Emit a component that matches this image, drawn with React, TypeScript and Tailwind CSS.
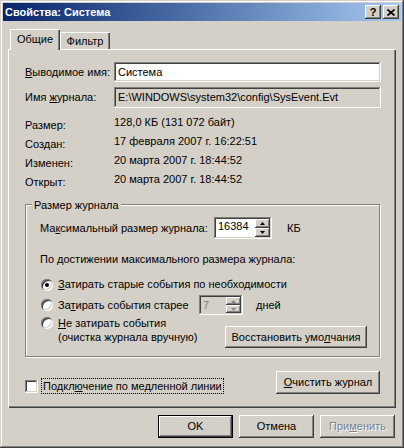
import React from "react";

const RAISED =
  "shadow-[inset_-1px_-1px_#404040,inset_1px_1px_#ffffff,inset_-2px_-2px_#808080,inset_2px_2px_#d4d0c8]";
const SUNKEN =
  "shadow-[inset_-1px_-1px_#ffffff,inset_1px_1px_#808080,inset_-2px_-2px_#d4d0c8,inset_2px_2px_#404040]";
const DEFAULT_BTN =
  "shadow-[inset_0_0_0_1px_#000000,inset_-2px_-2px_#404040,inset_2px_2px_#ffffff,inset_-3px_-3px_#808080]";

function Arrow({ up, color = "#000" }: { up?: boolean; color?: string }) {
  return (
    <svg width="5" height="3" viewBox="0 0 5 3" className="block">
      {up ? (
        <path d="M2.5 0 L5 3 L0 3 Z" fill={color} />
      ) : (
        <path d="M0 0 L5 0 L2.5 3 Z" fill={color} />
      )}
    </svg>
  );
}

function SpinButtons({ disabled }: { disabled?: boolean }) {
  const c = disabled ? "#808080" : "#000";
  return (
    <div className="flex flex-col w-[15px] h-full">
      <div className={`flex-1 bg-[#d4d0c8] ${RAISED} flex items-center justify-center`}>
        <Arrow up color={c} />
      </div>
      <div className={`flex-1 bg-[#d4d0c8] ${RAISED} flex items-center justify-center`}>
        <Arrow color={c} />
      </div>
    </div>
  );
}

function Radio({ checked }: { checked?: boolean }) {
  return (
    <div
      className="w-[12px] h-[12px] shrink-0 rounded-full bg-white flex items-center justify-center shadow-[inset_1px_1px_#808080,inset_-1px_-1px_#ffffff,inset_2px_2px_#404040,inset_-2px_-2px_#d4d0c8]"
    >
      {checked && <div className="w-[4px] h-[4px] rounded-full bg-black" />}
    </div>
  );
}

export default function App() {
  return (
    <div className="w-[404px] h-[448px] bg-[#d4d0c8] p-[3px] flex flex-col font-['Liberation_Sans',Arial,sans-serif] text-[11px] leading-[13px] text-black shadow-[inset_-1px_-1px_#404040,inset_1px_1px_#d4d0c8,inset_-2px_-2px_#808080,inset_2px_2px_#ffffff] select-none">
      {/* Title bar */}
      <div className="h-[18px] flex items-center bg-linear-to-r from-[#0a246a] to-[#a6caf0] pl-[2px] pr-[2px]">
        <div className="flex-1 text-white font-bold text-[11px]">Свойства: Система</div>
        <div className={`w-[16px] h-[14px] bg-[#d4d0c8] ${RAISED} flex items-center justify-center font-bold text-[11px] leading-[11px]`}>
          ?
        </div>
        <div className={`ml-[2px] w-[16px] h-[14px] bg-[#d4d0c8] ${RAISED} flex items-center justify-center`}>
          <svg width="8" height="7" viewBox="0 0 8 7" className="block">
            <path d="M0.5 0.5 L7.5 6.5 M7.5 0.5 L0.5 6.5" stroke="#000" strokeWidth="1.7" />
          </svg>
        </div>
      </div>

      <div className="flex flex-col px-[5px]">
        {/* Tabs */}
        <div className="mt-[8px] h-[20px] flex items-end relative z-10 pl-[2px]">
          <div className="w-[50px] h-[21px] -mb-[1px] bg-[#d4d0c8] flex items-center justify-center pb-[1px] shadow-[inset_1px_1px_#ffffff,inset_-1px_0_#404040,inset_-2px_0_#808080]">
            Общие
          </div>
          <div className="w-[50px] h-[17px] bg-[#d4d0c8] flex items-center justify-center pt-[1px] shadow-[inset_1px_1px_#ffffff,inset_-1px_0_#404040,inset_-2px_0_#808080]">
            Фильтр
          </div>
        </div>

        {/* Panel */}
        <div className="w-[388px] h-[359px] pl-[17px] pr-[15px] pt-[13px] flex flex-col shadow-[inset_1px_1px_#ffffff,inset_-1px_-1px_#404040,inset_-2px_-2px_#808080]">
          <div className="flex items-center h-[20px]">
            <div className="w-[89px] shrink-0">
              <span className="underline">В</span>ыводимое имя:
            </div>
            <div className={`w-[267px] h-[20px] bg-white ${SUNKEN} pl-[4px] flex items-center`}>Система</div>
          </div>
          <div className="flex items-center h-[21px] mt-[5px]">
            <div className="w-[89px] shrink-0">
              Имя <span className="underline">ж</span>урнала:
            </div>
            <div className={`w-[267px] h-[21px] bg-[#d4d0c8] ${SUNKEN} pl-[4px] flex items-center`}>
              E:\WINDOWS\system32\config\SysEvent.Evt
            </div>
          </div>

          <div className="mt-[8px] flex flex-col">
            {[
              ["Размер:", "128,0 КБ (131 072 байт)"],
              ["Создан:", "17 февраля 2007 г. 16:22:51"],
              ["Изменен:", "20 марта 2007 г. 18:44:52"],
              ["Открыт:", "20 марта 2007 г. 18:44:52"],
            ].map(([l, v]) => (
              <div key={l} className="flex h-[19px]">
                <div className="w-[89px] shrink-0 pt-[3px]">{l}</div>
                <div>{v}</div>
              </div>
            ))}
          </div>

          {/* Group box */}
          <div className="relative mt-[12px] h-[153px] w-[355px] border border-[#808080] shadow-[inset_1px_1px_#ffffff,1px_1px_#ffffff] pl-[14px] pt-[12px] flex flex-col">
            <div className="absolute left-[6px] top-[-6px] bg-[#d4d0c8] px-[2px]">Размер журнала</div>

            <div className="flex items-center h-[22px]">
              <div className="w-[174px] shrink-0">
                Ма<span className="underline">к</span>симальный размер журнала:
              </div>
              <div className={`w-[58px] h-[22px] bg-white ${SUNKEN} p-[2px] flex`}>
                <div className="flex-1 pl-[2px] pt-[1px]">16384</div>
                <SpinButtons />
              </div>
              <div className="ml-[15px]">КБ</div>
            </div>

            <div className="mt-[14px]">По достижении максимального размера журнала:</div>

            <div className="mt-[12px] flex items-center h-[13px]">
              <div className="ml-[1px]">
                <Radio checked />
              </div>
              <div className="ml-[5px]">
                <span className="underline">З</span>атирать старые события по необходимости
              </div>
            </div>

            <div className="mt-[4px] flex items-center h-[20px]">
              <div className="ml-[1px]">
                <Radio />
              </div>
              <div className="ml-[5px] w-[141px] shrink-0">
                За<span className="underline">т</span>ирать события старее
              </div>
              <div className={`w-[44px] h-[20px] bg-[#d4d0c8] ${SUNKEN} p-[2px] flex`}>
                <div className="flex-1 pl-[2px] text-[#808080] flex items-center">7</div>
                <SpinButtons disabled />
              </div>
              <div className="ml-[13px]">дней</div>
            </div>

            <div className="mt-[1px] flex items-start">
              <div className="ml-[1px] mt-[1px]">
                <Radio />
              </div>
              <div className="ml-[5px] w-[167px] shrink-0 leading-[14px]">
                <div>
                  <span className="underline">Н</span>е затирать события
                </div>
                <div>(очистка журнала вручную)</div>
              </div>
              <div className={`mt-[10px] w-[142px] h-[22px] bg-[#d4d0c8] ${RAISED} flex items-center justify-center`}>
                Восстановить умо<span className="underline">л</span>чания
              </div>
            </div>
          </div>

          <div className="mt-[14px] flex items-start justify-between pr-[1px]">
            <div className="flex items-start">
              <div className={`mt-[9px] w-[13px] h-[13px] bg-white ${SUNKEN}`} />
              <div className="ml-[3px] mt-[7px] h-[16px] border border-dotted border-black px-[1px] leading-[14px]">
                Подкл<span className="underline">ю</span>чение по медленной линии
              </div>
            </div>
            <div className={`w-[104px] h-[23px] bg-[#d4d0c8] ${RAISED} flex items-center justify-center`}>
              <span className="underline">О</span>чистить журнал
            </div>
          </div>
        </div>

        {/* Buttons */}
        <div className="mt-[7px] flex justify-end gap-[6px] pr-[1px]">
          <div className={`w-[75px] h-[23px] bg-[#d4d0c8] ${DEFAULT_BTN} flex items-center justify-center`}>OK</div>
          <div className={`w-[75px] h-[23px] bg-[#d4d0c8] ${RAISED} flex items-center justify-center`}>Отмена</div>
          <div className={`w-[75px] h-[23px] bg-[#d4d0c8] ${RAISED} flex items-center justify-center text-[#808080] [text-shadow:1px_1px_#ffffff]`}>
            При<span className="underline">м</span>енить
          </div>
        </div>
      </div>
    </div>
  );
}
